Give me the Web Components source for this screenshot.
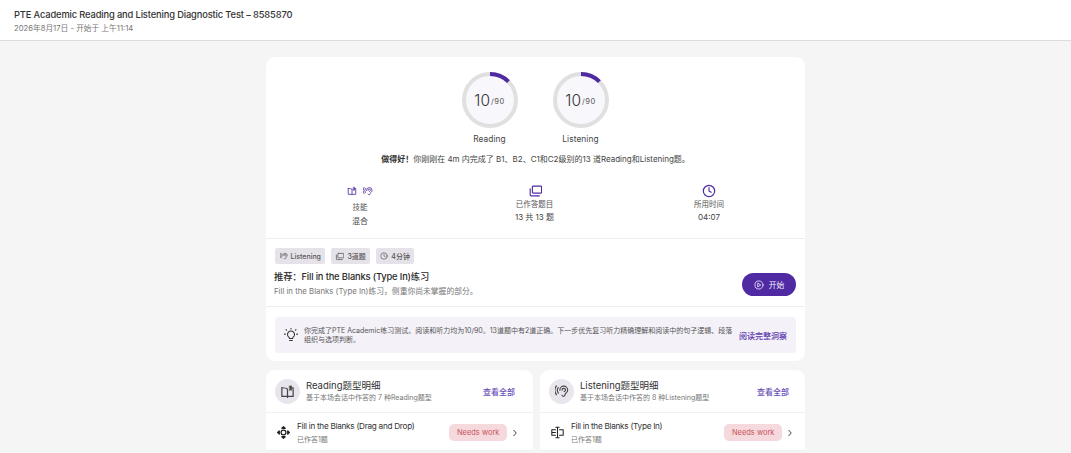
<!DOCTYPE html>
<html lang="zh"><head><meta charset="utf-8"><title>PTE</title>
<style>
html,body{margin:0;height:453px;overflow:hidden;background:#f5f5f5;font-family:Inter,"Noto Sans CJK SC",sans-serif;color:#222}
</style></head><body>
<x-header></x-header>
<x-main></x-main>
<script>
const ic={
book:'<path d="M2 4v9.300h5.200c.4 0 .8.300.8.700 0-.4.4-.7.8-.7H14V4h-1.500"/><path d="M8 5.500C7 4.300 4.500 4 2 4M8 5.500V14"/><path d="M10.300 2h2v5l-1-.8-1 .8z" fill="currentColor" stroke-width=".6"/>',
ear:'<path d="M5.500 7a4.500 4.500 0 0 1 9 0c0 2-1.500 2.800-2.200 3.500-.7.7-.6 2-1.500 3-.8.9-2.300.6-2.800-.5"/><path d="M8 7a2 2 0 0 1 4 0c0 1-1 1.300-1.500 1.500"/><path d="M3.800 4a5.500 5.500 0 0 0 0 6.500M1.600 2.200a8.500 8.500 0 0 0 0 10"/>',
cards:'<rect x="5" y="2.500" width="10.500" height="8" rx="1"/><path d="M2.500 5.500v7a1 1 0 0 0 1 1H13"/>',
clock:'<circle cx="8" cy="8" r="6.500"/><path d="M8 4.200V8l2.500 1.500"/>',
play:'<circle cx="8" cy="8" r="6.500"/><path d="M6.500 5.300 10.800 8l-4.300 2.700z"/>',
bulb:'<path d="M5.500 10.500a4 4 0 1 1 5 0c-.5.5-.7 1-.7 1.500H6.200c0-.5-.2-1-.7-1.500zM6.500 14.200h3M8 1V.2M1.500 7H.5M15.500 7h-1M3 2.500l-.7-.7M13 2.500l.7-.7"/>',
chev:'<path d="M5.500 2.500 10.500 8l-5 5.500"/>',
move:'<circle cx="8" cy="8" r="3"/><path d="M6 2.800 8 .8l2 2zM6 13.200l2 2 2-2zM2.800 6l-2 2 2 2zM13.200 6l2 2-2 2z" fill="currentColor"/>',
type:'<path d="M5.500 4.500H1v7h4.500M10.500 4.500H15v7h-4.500M8 1.500v13M6 1.500h4M6 14.500h4M1 8h4.500"/>'
};
const svg=(n,s,c,w)=>`<svg width="${s}" height="${s}" viewBox="0 0 16 16" fill="none" stroke="${c}" stroke-width="${w||1.300}" stroke-linecap="round" stroke-linejoin="round" style="color:${c};display:block;flex:none">${ic[n]}</svg>`;
class Base extends HTMLElement{
  render(h){this.attachShadow({mode:'open'}).innerHTML=h}
}
customElements.define('x-header',class extends Base{connectedCallback(){this.render(`<style>
:host{display:block;background:#fff;border-bottom:1px solid #dcdcdc;padding:8px 14px 0;height:32px}
.t{font-size:9.300px;line-height:13px;font-weight:500;color:#333;letter-spacing:-.13px;white-space:nowrap}
.s{font-size:7.700px;line-height:11px;margin-top:2px;color:#777}
</style><div class="t">PTE Academic Reading and Listening Diagnostic Test – 8585870</div><div class="s">2026年8月17日 - 开始于 上午11:14</div>`)}});
customElements.define('x-ring',class extends Base{connectedCallback(){this.render(`<style>
:host{display:flex;flex-direction:column;align-items:center;width:56px}
.r{position:relative;width:56px;height:56px}
svg{position:absolute;inset:0}
.n{position:absolute;inset:0;display:flex;align-items:center;justify-content:center;gap:1px;font-size:15.500px;font-weight:300;color:#333}
.n small{font-size:7.500px;margin-top:3px;letter-spacing:.5px;color:#555;font-weight:400}
.l{font-size:8.300px;line-height:11px;margin-top:6px;color:#444;white-space:nowrap;letter-spacing:.1px}
</style><div class="r"><svg width="56" height="56" viewBox="0 0 56 56"><circle cx="28" cy="28" r="26" fill="#f8f7fc" stroke="#e0e0e0" stroke-width="4"/><path d="M28 2A26 26 0 0 1 46.400 9.600" fill="none" stroke="#4f2aa3" stroke-width="4"/></svg><div class="n">10<small>/90</small></div></div><div class="l">${this.getAttribute('label')}</div>`)}});
customElements.define('x-stat',class extends Base{connectedCallback(){this.render(`<style>
:host{display:flex;flex-direction:column;align-items:center;font-size:7.500px;color:#555;width:60px}
.i{height:14px;display:flex;gap:6px;align-items:center;justify-content:center}
.a{line-height:11px;margin-top:4px;white-space:nowrap}
.a.c{margin-top:1px}
.b{line-height:11px;margin-top:3px;font-size:8px;color:#444;white-space:nowrap}
.a.c + .b{margin-top:2px}
</style><div class="i"><slot></slot></div><div class="a ${this.hasAttribute('tight')?'c':''}">${this.getAttribute('a')}</div><div class="b">${this.getAttribute('b')}</div>`)}});
customElements.define('x-tag',class extends Base{connectedCallback(){this.render(`<style>
:host{display:inline-flex;align-items:center;gap:3px;height:16px;padding:0 4.500px;background:#e6e2ea;border-radius:2px;font-size:7px;font-weight:500;color:#555;white-space:nowrap}
</style><slot></slot>`)}});
customElements.define('x-row',class extends Base{connectedCallback(){this.render(`<style>
:host{display:flex;align-items:center;height:35px;padding:2px var(--rp,14px) 0 11px;border-bottom:1px solid #efefef}
.ic{width:20px}
.m{flex:1;padding-top:2px}
.t{font-size:8.200px;line-height:11px;color:#333;margin-bottom:3px;margin-top:-1px;letter-spacing:-.28px}
.s{font-size:7px;line-height:10px;color:#777}
.p{font-size:7.500px;height:17px;line-height:17px;padding:0 7.500px;background:#f6d9dc;color:#c8525c;border-radius:5px;margin-right:4px}
</style><div class="ic"><slot></slot></div><div class="m"><div class="t">${this.getAttribute('t')}</div><div class="s">已作答1题</div></div><div class="p">Needs work</div>${svg('chev',8,'#333',1.800)}`)}});
customElements.define('x-panel',class extends Base{connectedCallback(){const l=this.getAttribute('t')=='Listening';this.render(`<style>
:host{display:block;flex:none;width:${l?265:267}px;--rp:${l?11:14}px;background:#fff;border-radius:9px 9px 0 0}
.h{display:flex;align-items:center;height:42px;padding:0 ${l?16:18}px 0 9px;border-bottom:1px solid #f1f1f1}
.c{width:25px;height:25px;border-radius:50%;background:#e9e5ec;display:flex;align-items:center;justify-content:center;margin-right:6px;flex:none}
.m{flex:1}
.t{font-size:9.500px;line-height:13px;color:#333}
.s{font-size:7px;line-height:10px;color:#777;margin-top:1px}
.a{font-size:8px;color:#6a50b8;font-weight:500}
</style><div class="h"><div class="c"><slot name="icon"></slot></div><div class="m"><div class="t">${this.getAttribute('t')}题型明细</div><div class="s">基于本场会话中作答的 ${this.getAttribute('n')} 种${this.getAttribute('t')}题型</div></div><div class="a">查看全部</div></div><slot></slot>`)}});
customElements.define('x-summary',class extends Base{connectedCallback(){this.render(`<style>
:host{display:block;background:#fff;border-radius:9px;height:304px;overflow:hidden}
.rings{display:flex;justify-content:center;gap:35px;padding-top:15px;margin-left:-1px}
.msg{text-align:center;font-size:8px;line-height:11px;margin-top:9px;color:#444}
.msg b{color:#333}
.stats{display:flex;justify-content:space-between;padding:0 66px 0 64px;margin-top:19px;height:50px}
.rec{border-top:1px solid #eee;border-bottom:1px solid #eee;height:69px;box-sizing:border-box;padding:9px 9px 0 8px;display:flex;margin-top:4px}
.rec .l{flex:1}
.tags{display:flex;gap:5.500px;margin-left:1px}
.h{font-size:9.300px;line-height:13px;font-weight:500;color:#2a2a2a;margin-top:6px;letter-spacing:-.15px}
.d{font-size:7.800px;line-height:11px;color:#777;margin-top:3px}
.btn{display:flex;align-items:center;justify-content:center;gap:5px;width:54px;height:23px;border-radius:12px;background:#4f2aa3;color:#f3effa;font-size:7.800px;margin-top:25px}
.ins{display:flex;align-items:center;margin:10px 9px 0;height:36px;background:#f4f1f8;border-radius:4px;padding:0 9px 0 9px}
.ins p{flex:1;margin:0 3px 0 6px;font-size:7px;line-height:9.500px;color:#555}
.lnk{font-size:8px;color:#5a34ad;font-weight:500;white-space:nowrap}
</style><div class="rings"><x-ring label="Reading"></x-ring><x-ring label="Listening"></x-ring></div>
<div class="msg"><b>做得好！</b>你刚刚在 4m 内完成了 B1、B2、C1和C2级别的13 道Reading和Listening题。</div>
<div class="stats">
<x-stat a="技能" b="混合">${svg('book',10,'#4f2aa3')}${svg('ear',10,'#4f2aa3')}</x-stat>
<x-stat tight a="已作答题目" b="13 共 13 题">${svg('cards',14,'#4f2aa3')}</x-stat>
<x-stat tight a="所用时间" b="04:07">${svg('clock',14,'#4f2aa3')}</x-stat>
</div>
<div class="rec"><div class="l"><div class="tags"><x-tag>${svg('ear',8,'#555')}Listening</x-tag><x-tag>${svg('cards',9,'#555')}3道题</x-tag><x-tag>${svg('clock',8,'#555')}4分钟</x-tag></div>
<div class="h">推荐：Fill in the Blanks (Type In)练习</div><div class="d">Fill in the Blanks (Type In)练习，侧重你尚未掌握的部分。</div></div>
<div class="btn">${svg('play',10,'#f3effa')}开始</div></div>
<div class="ins">${svg('bulb',14,'#333',1.200)}<p>你完成了PTE Academic练习测试。阅读和听力均为10/90。13道题中有2道正确。下一步优先复习听力精确理解和阅读中的句子逻辑、段落组织与选项判断。</p><div class="lnk">阅读完整洞察</div></div>`)}});
customElements.define('x-main',class extends Base{connectedCallback(){this.render(`<style>
:host{display:block;width:539px;margin-left:266px;padding-top:16px}
.g{display:flex;gap:7px;margin-top:9px}
</style><x-summary></x-summary><div class="g">
<x-panel t="Reading" n="7"><span slot="icon">${svg('book',15,'#444')}</span><x-row t="Fill in the Blanks (Drag and Drop)">${svg('move',13,'#222',1.500)}</x-row></x-panel>
<x-panel t="Listening" n="8"><span slot="icon">${svg('ear',14,'#444')}</span><x-row t="Fill in the Blanks (Type In)">${svg('type',13,'#222')}</x-row></x-panel>
</div>`)}});
</script></body></html>
